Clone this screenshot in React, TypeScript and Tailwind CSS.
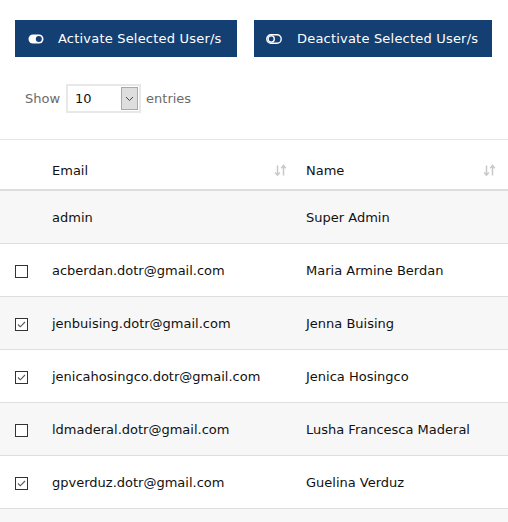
import React from "react";

const rows = [
  { email: "admin", name: "Super Admin", cb: null as null | boolean },
  { email: "acberdan.dotr@gmail.com", name: "Maria Armine Berdan", cb: false },
  { email: "jenbuising.dotr@gmail.com", name: "Jenna Buising", cb: true },
  { email: "jenicahosingco.dotr@gmail.com", name: "Jenica Hosingco", cb: true },
  { email: "ldmaderal.dotr@gmail.com", name: "Lusha Francesca Maderal", cb: false },
  { email: "gpverduz.dotr@gmail.com", name: "Guelina Verduz", cb: true },
];

function SortIcon() {
  return (
    <svg width="13" height="13" viewBox="0 0 13 13" className="shrink-0">
      <g stroke="#c8c8c8" strokeWidth="1.5" fill="none">
        <path d="M3.5 1.5v9.5" />
        <path d="M1.2 8.5l2.3 2.7l2.3-2.7" />
        <path d="M9.5 2v9.5" />
        <path d="M7.2 4.2l2.3-2.7l2.3 2.7" />
      </g>
    </svg>
  );
}

function Check({ checked }: { checked: boolean }) {
  return (
    <div className="w-[13px] h-[13px] border border-[#333] bg-white flex items-center justify-center">
      {checked && (
        <svg width="11" height="11" viewBox="0 0 11 11">
          <path d="M2 5.5l2.3 2.3L9 3" stroke="#555" strokeWidth="1.1" fill="none" />
        </svg>
      )}
    </div>
  );
}

export default function App() {
  return (
    <div
      className="w-[508px] h-[522px] bg-white overflow-hidden text-[#222]"
      style={{ fontFamily: '"DejaVu Sans", Verdana, sans-serif' }}
    >
      <div className="flex gap-[17px] pl-[15px] pt-[20px]">
        <button className="h-[37px] w-[222px] bg-[#143f73] text-white text-[13px] flex items-center pl-[13px] gap-[14px]">
          <svg width="16" height="10" viewBox="0 0 16 10">
            <rect x="0.5" y="0.5" width="15" height="9" rx="4.5" fill="white" />
            <circle cx="10.8" cy="5" r="3" fill="#143f73" />
          </svg>
          <span className="tracking-[0.2px]">Activate Selected User/s</span>
        </button>
        <button className="h-[37px] w-[238px] bg-[#143f73] text-white text-[13px] flex items-center pl-[12px] gap-[15px]">
          <svg width="16" height="10" viewBox="0 0 16 10">
            <rect x="0.8" y="0.8" width="14.4" height="8.4" rx="4.2" fill="none" stroke="white" strokeWidth="1.4" />
            <circle cx="5.2" cy="5" r="3.1" fill="none" stroke="white" strokeWidth="1.3" />
          </svg>
          <span className="tracking-[0.2px]">Deactivate Selected User/s</span>
        </button>
      </div>

      <div className="flex items-center pl-[25px] mt-[27px] text-[13px] text-[#6b6b6b]">
        <span>Show</span>
        <div className="ml-[6px] w-[75px] h-[29px] border-2 border-[#e8e8e8] flex items-center justify-between pl-[7px] pr-[1px]">
          <span className="text-[#111] text-[13px]">10</span>
          <div className="w-[17px] h-[23px] bg-[#dedede] border border-[#a9a9a9] flex items-center justify-center">
            <svg width="9" height="6" viewBox="0 0 9 6">
              <path d="M1 1l3.5 3.5L8 1" stroke="#444" strokeWidth="1" fill="none" />
            </svg>
          </div>
        </div>
        <span className="ml-[5px]">entries</span>
      </div>

      <div className="mt-[26px] border-t border-[#e6e6e6]">
        <div className="flex items-center h-[51px] pt-[12px] border-b-2 border-[#dddddd] text-[13px] text-[#111]">
          <div className="w-[52px]" />
          <div className="w-[254px] flex items-center justify-between pr-[19px]">
            <span>Email</span>
            <SortIcon />
          </div>
          <div className="flex-1 flex items-center justify-between pr-[12px]">
            <span>Name</span>
            <SortIcon />
          </div>
        </div>
        {rows.map((r, i) => (
          <div
            key={r.email}
            className={
              "flex items-center h-[53px] pt-[2px] border-b border-[#dedede] text-[13px] text-[#111] " +
              (i % 2 === 0 ? "bg-[#f7f7f7]" : "bg-white")
            }
          >
            <div className="w-[52px] pl-[15px]">
              {r.cb !== null && <Check checked={r.cb} />}
            </div>
            <div className="w-[254px]">{r.email}</div>
            <div className="flex-1">{r.name}</div>
          </div>
        ))}
        <div className="h-[20px] bg-[#f7f7f7]" />
      </div>
    </div>
  );
}
